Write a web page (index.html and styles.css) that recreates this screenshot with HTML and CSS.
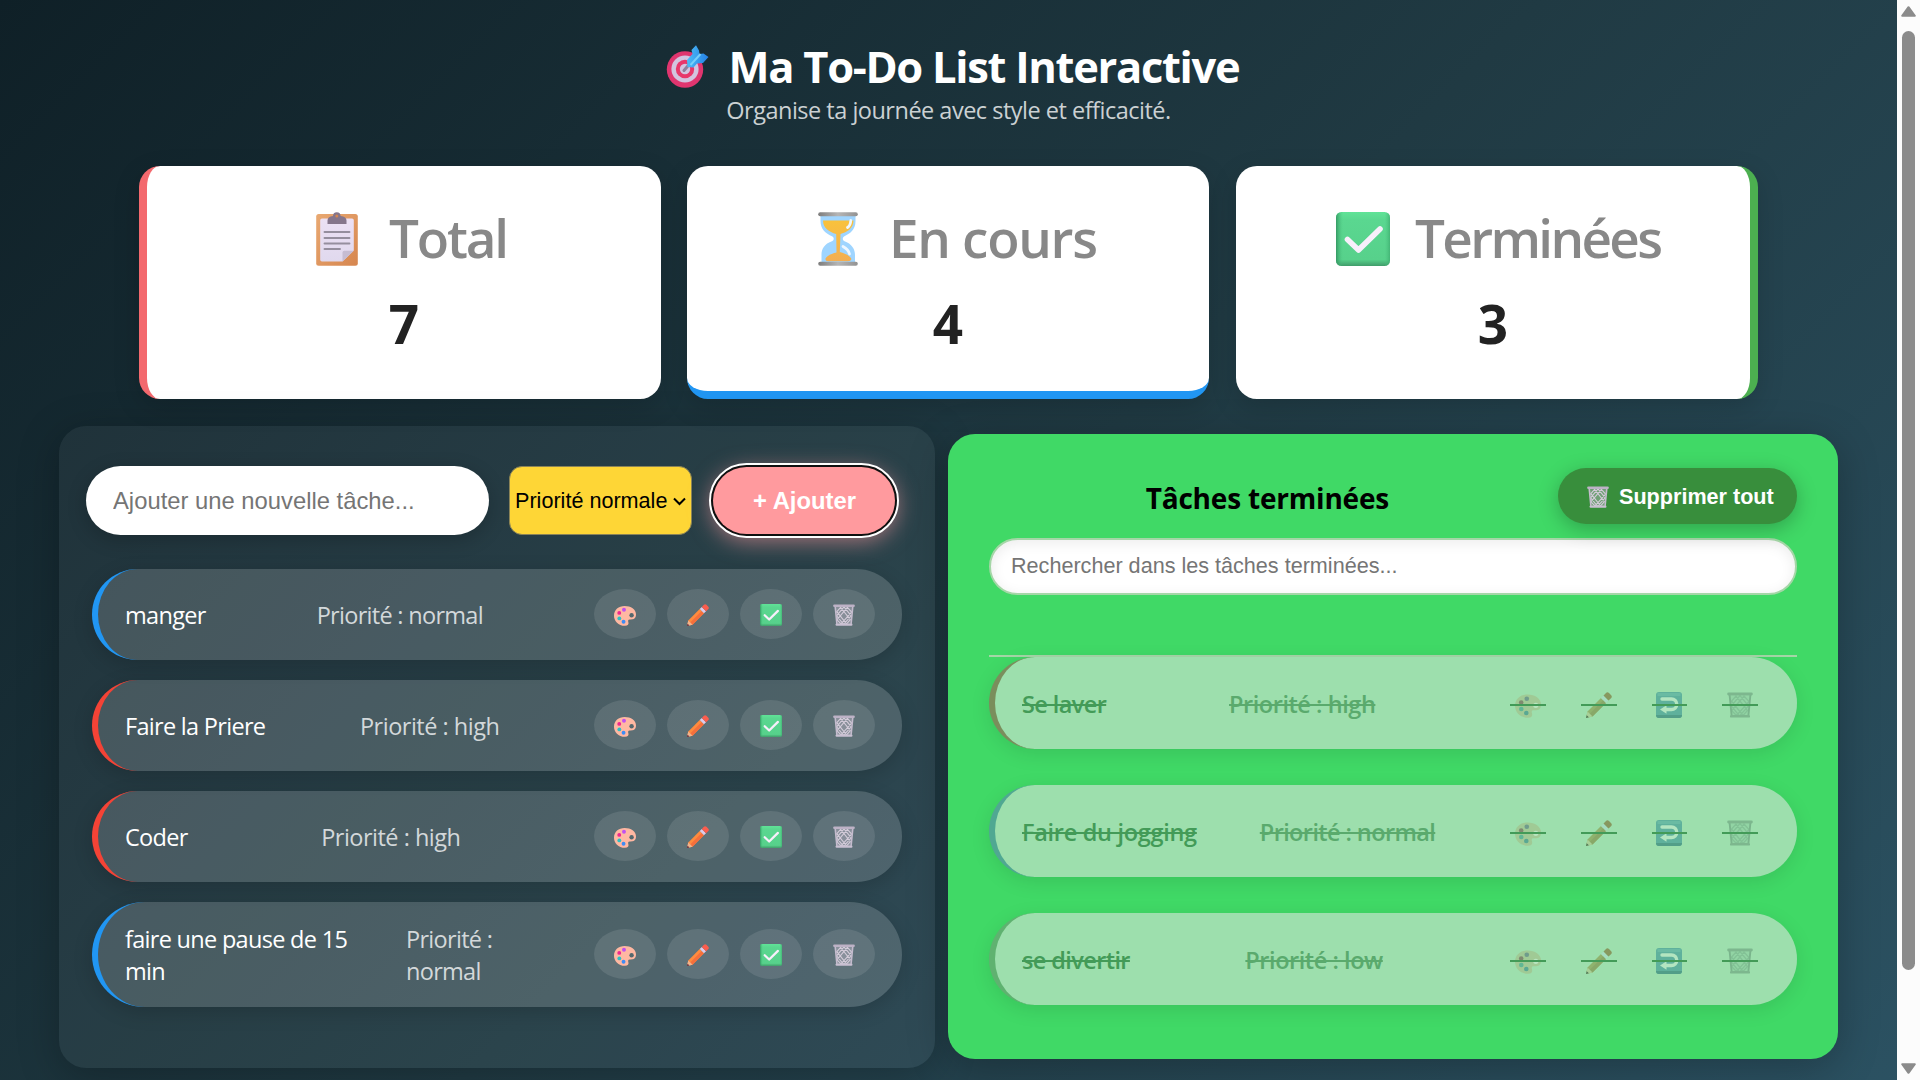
FILE: index.html
```html
<!DOCTYPE html>
<html lang="fr">
<head>
<meta charset="utf-8">
<title>Ma To-Do List Interactive</title>
<link rel="stylesheet" href="styles.css">
</head>
<body>
<svg class="sprite" aria-hidden="true">
  <defs>
    <linearGradient id="g-sand" x1="0" y1="0" x2="0" y2="1"><stop offset="0" stop-color="#f9c23c"/><stop offset="1" stop-color="#f3ae52"/></linearGradient>
    <linearGradient id="g-metal" x1="0" y1="0" x2="1" y2="0"><stop offset="0" stop-color="#7d7d7d"/><stop offset=".5" stop-color="#b5b5b5"/><stop offset="1" stop-color="#929292"/></linearGradient>
    <linearGradient id="g-board" x1="0" y1="0" x2="1" y2="1"><stop offset="0" stop-color="#e9a972"/><stop offset="1" stop-color="#d6864f"/></linearGradient>
    <linearGradient id="g-paper" x1="0" y1="0" x2="0" y2="1"><stop offset="0" stop-color="#ece0f4"/><stop offset="1" stop-color="#e0d9ee"/></linearGradient>
    <linearGradient id="g-check" x1="0" y1="0" x2="0" y2="1"><stop offset="0" stop-color="#60e397"/><stop offset=".15" stop-color="#5ad790"/><stop offset=".88" stop-color="#57d18b"/><stop offset="1" stop-color="#409c6a"/></linearGradient>
    <linearGradient id="g-side" x1="0" y1="0" x2="1" y2="0"><stop offset="0" stop-color="#2f8f5c" stop-opacity=".85"/><stop offset=".13" stop-color="#49c47f" stop-opacity="0"/><stop offset=".9" stop-color="#49c47f" stop-opacity="0"/><stop offset="1" stop-color="#3ba86c" stop-opacity=".7"/></linearGradient>
    <linearGradient id="g-dart" x1="0" y1="0" x2="1" y2="0"><stop offset="0" stop-color="#4cbcf5"/><stop offset="1" stop-color="#2480e6"/></linearGradient>
  </defs>
  <symbol id="i-target" viewBox="0 0 42 43">
    <ellipse cx="18.5" cy="24.5" rx="18.2" ry="18.3" fill="#e0356f"/>
    <circle cx="18.5" cy="24" r="13.6" fill="#d3c3df"/>
    <circle cx="18.5" cy="24" r="9.2" fill="#e8366a"/>
    <circle cx="18.5" cy="24" r="5.2" fill="#d3c3df"/>
    <path d="M17.5 25.5 23 19" stroke="#8e7f9d" stroke-width="3" stroke-linecap="round"/>
    <path d="M21 22 20.500 15 26 9 25 5 29.500 .3 32.500 5.500 33 9 37 8.500 42 12 36.500 18 30.500 18.500 27 22.500Z" fill="url(#g-dart)"/>
    <path d="M24 20 34 9" stroke="#77cffa" stroke-width="2"/>
  </symbol>
  <symbol id="i-clipboard" viewBox="0 0 42 54">
    <rect x=".2" y="2" width="41.600" height="51.800" rx="2.500" fill="url(#g-board)"/>
    <path d="M6 6.500H36a1.800 1.800 0 0 1 1.800 1.800V38.500L26.500 49.500H6a1.800 1.800 0 0 1-1.800-1.800V8.300A1.800 1.800 0 0 1 6 6.500Z" fill="url(#g-paper)"/>
    <path d="M26.500 49.500V40.500a1.800 1.800 0 0 1 1.800-1.800h9.500Z" fill="#c6bcd2"/>
    <path d="M11.500 12V8.500Q11.500 4.500 17 4a3.800 3.800 0 0 1 7.600 0Q30.500 4.500 30.500 8.500V12Z" fill="#85758b"/>
    <circle cx="20.800" cy="4" r="1.500" fill="#d6864f"/>
    <path d="M8.500 20H33.500M8.500 26H33.500M8.500 31.500H33.500M8.500 37H24" stroke="#958e9e" stroke-width="1.900" stroke-linecap="round"/>
  </symbol>
  <symbol id="i-hourglass" viewBox="0 0 40 54">
    <path d="M2.500 3H37.500V9C37.500 18 32 21.500 26 24.500Q23.500 26.500 26 29C34 32 37 37 37 43V51H3.500V43C3.500 37 6 32 14.500 29Q17 26.500 14.500 24.500C7 21 2.500 17 2.500 9Z" fill="#9fd5ff"/>
    <path d="M5 8.500H35.500C35.500 17 28 20.500 22.500 22L21.800 40C27 41.500 32 43.500 33.500 47Q33 49.300 30 49.300H10Q7 49.300 7.500 46.500C9 43.500 14 41.500 18.500 40.500L18.200 22C11 20 5 16 5 8.500Z" fill="url(#g-sand)"/>
    <path d="M32.800 8.500Q32.500 13.500 29.500 15.500M25 34.500Q30.500 37.500 31.500 42" stroke="#eef7ff" stroke-width="2.800" stroke-linecap="round" fill="none"/>
    <rect x=".2" y=".2" width="39.600" height="4" rx="2" fill="url(#g-metal)"/>
    <rect x=".2" y="49.800" width="39.600" height="4" rx="2" fill="url(#g-metal)"/>
  </symbol>
  <symbol id="i-check" viewBox="0 0 54 54">
    <rect width="54" height="54" rx="5.500" fill="url(#g-check)"/>
    <rect width="54" height="54" rx="5.500" fill="url(#g-side)"/>
    <path d="M11.500 27.500 22.500 38 44 17" fill="none" stroke="#f7effb" stroke-width="5.600" stroke-linecap="round" stroke-linejoin="round"/>
  </symbol>
  <symbol id="i-palette" viewBox="0 0 26 26">
    <path d="M12.500 2.500C20 2.500 26 6.500 26 12.500 26 18 22 18.500 19 18.200 16.500 18 16.500 19.500 17 21.500 17.600 24 16.500 25.800 13 25.800 5 25.800 0 20 0 13.800 0 7 5.500 2.500 12.500 2.500Z" fill="var(--pal, #ffb8a2)"/>
    <circle cx="20.800" cy="13.300" r="2.600" fill="var(--hole, #54686e)"/>
    <circle cx="11.800" cy="6.800" r="2.300" fill="var(--c1, #c050f0)"/>
    <circle cx="6.200" cy="10.500" r="2.300" fill="var(--c2, #f0278f)"/>
    <circle cx="6.300" cy="17" r="2.300" fill="var(--c3, #2fc0c4)"/>
    <circle cx="11.300" cy="21" r="2.300" fill="var(--c4, #3f8cf4)"/>
  </symbol>
  <symbol id="i-pencil" viewBox="0 0 26 26">
    <path d="M0 26 1.500 19.500 15 6 20 11 6.500 24.500Z" fill="var(--body, #ff8b3d)"/>
    <path d="M3.800 21.800 17.300 8.300 20 11 6.500 24.500Z" fill="var(--edge, #f56f3c)"/>
    <path d="M0 26 1.500 19.500 6.500 24.500Z" fill="var(--wood, #f0b38e)"/>
    <path d="M0 26 .700 23.200 2.800 25.300Z" fill="var(--lead, #4b1f3a)"/>
    <path d="M15 6 17.500 3.500 22.500 8.500 20 11Z" fill="var(--band, #dccbe8)"/>
    <path d="M17.500 3.500 20 1Q21.300-.5 23 1L25.200 3.200Q26.500 4.800 25 6.200L22.500 8.500Z" fill="var(--rub, #fb5d4e)"/>
  </symbol>
  <symbol id="i-trash" viewBox="0 0 26 26">
    <path d="M3 3.500 5 23.500H21L23 3.500Z" fill="var(--mesh, #c5bccd)" fill-opacity=".4"/>
    <path d="M3.800 10 9 4 20.500 18.500 16 23.500 4.500 9M4.500 18.500 9.500 23.500 22 9.500 17 4 4.800 18.500M13 3.500 4.300 14 12.500 24 21.500 14Z" fill="none" stroke="var(--mesh, #d3cbd9)" stroke-width="1.300"/>
    <path d="M2.600 3 4.600 23.500M23.400 3 21.400 23.500" stroke="var(--side, #c4bbcd)" stroke-width="1.900"/>
    <rect x=".2" y=".6" width="25.600" height="2.900" rx="1.400" fill="var(--rim, #bdb2c6)"/>
    <rect x="3" y="23" width="20" height="2.600" rx="1.200" fill="var(--rim, #c9c0d2)"/>
  </symbol>
  <symbol id="i-return" viewBox="0 0 26 26">
    <rect width="26" height="26" rx="3" fill="#5fb19c"/>
    <path d="M1.500 1H24.500V4H1.500Z" fill="#6abba3"/>
    <path d="M0 23H26Q26 26 23 26H3Q0 26 0 23Z" fill="#529e88"/>
    <path d="M6 7H15.500A5.200 5.200 0 0 1 15.500 17.500H9" fill="none" stroke="#b3e5c0" stroke-width="3.400" stroke-linecap="round"/>
    <path d="M4 17.500 10.500 13.200V21.800Z" fill="#b3e5c0"/>
  </symbol>
</svg>

<main class="page">
  <header class="hero">
    <h1 class="title"><svg class="title-icon"><use href="#i-target"/></svg><span>Ma To-Do List Interactive</span></h1>
    <p class="subtitle">Organise ta journée avec style et efficacité.</p>
  </header>

  <section class="stats">
    <article class="stat stat-total">
      <h2 class="stat-label"><svg class="ico-clip"><use href="#i-clipboard"/></svg><span>Total</span></h2>
      <p class="stat-value">7</p>
    </article>
    <article class="stat stat-progress">
      <h2 class="stat-label"><svg class="ico-hour"><use href="#i-hourglass"/></svg><span>En cours</span></h2>
      <p class="stat-value">4</p>
    </article>
    <article class="stat stat-done">
      <h2 class="stat-label"><svg class="ico-check"><use href="#i-check"/></svg><span>Terminées</span></h2>
      <p class="stat-value">3</p>
    </article>
  </section>

  <div class="columns">
    <section class="panel todo">
      <form class="add">
        <input class="add-input" type="text" placeholder="Ajouter une nouvelle tâche...">
        <div class="add-select"><span>Priorité normale</span><svg class="chevron" viewBox="0 0 13 9"><path d="M1 1.500 6.500 7 12 1.500" fill="none" stroke="#000" stroke-width="2"/></svg></div>
        <button class="add-button" type="button">+ Ajouter</button>
      </form>
      <ul class="tasks">
        <li class="task normal"><span class="name">manger</span><span class="prio">Priorité : normal</span><div class="actions"><button><svg><use href="#i-palette"/></svg></button><button><svg><use href="#i-pencil"/></svg></button><button><svg><use href="#i-check"/></svg></button><button><svg><use href="#i-trash"/></svg></button></div></li>
        <li class="task high"><span class="name">Faire la Priere</span><span class="prio">Priorité : high</span><div class="actions"><button><svg><use href="#i-palette"/></svg></button><button><svg><use href="#i-pencil"/></svg></button><button><svg><use href="#i-check"/></svg></button><button><svg><use href="#i-trash"/></svg></button></div></li>
        <li class="task high"><span class="name">Coder</span><span class="prio">Priorité : high</span><div class="actions"><button><svg><use href="#i-palette"/></svg></button><button><svg><use href="#i-pencil"/></svg></button><button><svg><use href="#i-check"/></svg></button><button><svg><use href="#i-trash"/></svg></button></div></li>
        <li class="task normal tall"><span class="name">faire une pause de 15<br>min</span><span class="prio">Priorité :<br>normal</span><div class="actions"><button><svg><use href="#i-palette"/></svg></button><button><svg><use href="#i-pencil"/></svg></button><button><svg><use href="#i-check"/></svg></button><button><svg><use href="#i-trash"/></svg></button></div></li>
      </ul>
    </section>

    <section class="panel finished">
      <div class="finished-head">
        <h2 class="finished-title">Tâches terminées</h2>
        <button class="clear"><svg class="clear-icon"><use href="#i-trash"/></svg><span>Supprimer tout</span></button>
      </div>
      <input class="search" type="text" placeholder="Rechercher dans les tâches terminées...">
      <ul class="done-list">
        <li class="done high"><span class="name">Se laver</span><span class="prio">Priorité : high</span><div class="actions"><button><svg><use href="#i-palette"/></svg></button><button><svg><use href="#i-pencil"/></svg></button><button><svg><use href="#i-return"/></svg></button><button><svg><use href="#i-trash"/></svg></button></div></li>
        <li class="done normal"><span class="name">Faire du jogging</span><span class="prio">Priorité : normal</span><div class="actions"><button><svg><use href="#i-palette"/></svg></button><button><svg><use href="#i-pencil"/></svg></button><button><svg><use href="#i-return"/></svg></button><button><svg><use href="#i-trash"/></svg></button></div></li>
        <li class="done low"><span class="name">se divertir</span><span class="prio">Priorité : low</span><div class="actions"><button><svg><use href="#i-palette"/></svg></button><button><svg><use href="#i-pencil"/></svg></button><button><svg><use href="#i-return"/></svg></button><button><svg><use href="#i-trash"/></svg></button></div></li>
      </ul>
    </section>
  </div>
</main>
<aside class="scrollbar">
  <svg class="arrow" viewBox="0 0 15 11"><path d="M7.500 1.200 13.800 9.800H1.200Z" fill="#8b8b8b" stroke="#8b8b8b" stroke-width="2" stroke-linejoin="round"/></svg>
  <div class="thumb"></div>
  <svg class="arrow" viewBox="0 0 15 11"><path d="M7.500 9.800 13.800 1.200H1.200Z" fill="#8b8b8b" stroke="#8b8b8b" stroke-width="2" stroke-linejoin="round"/></svg>
</aside>
</body>
</html>
```
FILE: styles.css
```css
* { box-sizing: border-box; }

body {
  margin: 0;
  height: 1080px;
  display: grid;
  grid-template-columns: 1fr 23px;
  overflow: hidden;
  font-family: "Open Sans", "Noto Sans", sans-serif;
}

h1, h2, p, ul { margin: 0; padding: 0; }
ul { list-style: none; }
button { border: 0; padding: 0; font: inherit; }
.sprite { position: absolute; width: 0; height: 0; }

.page {
  height: 1080px;
  padding-top: 40px;
  background: linear-gradient(135deg, #0f2027, #203a43, #2c5364) 0 0 / 100% 1190px no-repeat;
}

/* Header */
.hero { display: flex; flex-direction: column; align-items: center; height: 126px; }
.title {
  display: flex;
  align-items: center;
  gap: 20px;
  height: 54px;
  padding-left: 8px;
  font-size: 43.500px;
  line-height: 54px;
  font-weight: 700;
  letter-spacing: -1.300px;
  color: #fff;
}
.title-icon { width: 43px; height: 43px; margin-bottom: 2px; }
.title span { white-space: nowrap; }
.subtitle { height: 34px; line-height: 33px; font-size: 23.500px; font-weight: 430; letter-spacing: -.500px; color: #cbd1d3; }

/* Statistics */
.stats {
  display: grid;
  grid-template-columns: 522px 522px 523px;
  gap: 26px;
  padding-left: 139px;
  height: 233px;
}
.stat {
  display: flex;
  flex-direction: column;
  align-items: center;
  padding-top: 36px;
  background: #fff;
  border-radius: 21px;
  box-shadow: 0 8px 27px rgba(0, 0, 0, .15);
}
.stat-total { border-left: 8px solid #f3696e; }
.stat-progress { border-bottom: 8px solid #2196f3; }
.stat-done { margin-left: 1px; border-right: 8px solid #4caf50; }
.stat-label {
  display: flex;
  align-items: center;
  align-self: stretch;
  height: 74px;
  line-height: 72px;
  font-size: 53px;
  font-weight: 600;
  white-space: nowrap;
  color: #888;
}
.stat-label span { padding-bottom: 2px; }
.stat-total .stat-label { padding-left: 169px; letter-spacing: -2.200px; }
.stat-progress .stat-label { padding-left: 131px; letter-spacing: -1.300px; }
.stat-done .stat-label { padding-left: 100px; letter-spacing: -2.650px; }
.stat-value { margin-top: 12px; height: 72px; line-height: 72px; font-size: 53px; font-weight: 700; color: #222; }
.ico-clip { width: 42px; height: 54px; margin-right: 31px; }
.ico-hour { width: 40px; height: 54px; margin-right: 31px; }
.ico-check { width: 54px; height: 54px; margin-right: 25px; }

/* Columns */
.columns { display: flex; gap: 13px; align-items: flex-start; padding: 27px 59px 0; }
.panel { border-radius: 27px; box-shadow: 0 8px 40px rgba(0, 0, 0, .25); }
.todo { width: 876px; height: 642px; padding: 40px 27px; background: rgba(255, 255, 255, .05); }
.add { display: flex; margin: 0; }
.add-input {
  width: 403px;
  height: 69px;
  padding: 0 27px;
  border: 0;
  border-radius: 35px;
  background: #fff;
  font: 23.800px "Liberation Sans", Arial, sans-serif;
  box-shadow: 0 5px 20px rgba(0, 0, 0, .2);
}
.add-select {
  display: flex;
  align-items: center;
  justify-content: space-between;
  width: 183px;
  height: 69px;
  margin-left: 20px;
  padding: 1px 5px 0;
  border: 1px solid #8a8358;
  border-radius: 13px;
  background: #fed636;
  font: 21.600px "Liberation Sans", Arial, sans-serif;
  white-space: nowrap;
  color: #000;
}
.chevron { width: 13px; height: 9px; }
.add-button {
  width: 182px;
  height: 67px;
  margin: 1px 0 0 21px;
  padding-left: 1px;
  border-radius: 34px;
  background: #ff9a9e;
  outline: 2px solid #fff;
  outline-offset: 2px;
  box-shadow: 0 0 0 2.500px #101010, 0 5px 22px 2px rgba(255, 154, 158, .6);
  font: bold 23.800px "Liberation Sans", Arial, sans-serif;
  color: #fff;
}
.tasks { display: grid; gap: 20px; margin: 34px 6px 0; }
.task {
  display: flex;
  align-items: center;
  justify-content: space-between;
  width: 810px;
  height: 91px;
  padding: 0 27px;
  border-left: 6px solid #2196f3;
  border-radius: 53px;
  background: rgba(255, 255, 255, .16);
  box-shadow: 0 5px 20px rgba(0, 0, 0, .16);
  font-size: 23.500px;
  line-height: 32px;
  font-weight: 440;
  letter-spacing: -.700px;
  color: #fff;
  white-space: nowrap;
}
.task.high { border-left-color: #f44336; }
.task.tall { height: 105px; }
.task .name, .task .prio { padding-top: 1px; }
.done .name, .done .prio { padding-top: 2px; }
.tall .name { width: 281px; }
.tall .prio { margin-right: auto; }
.task .prio { color: #d3d8da; }
.task.high .prio { letter-spacing: -.500px; }
.actions { display: flex; }
.task .actions { gap: 11px; margin-top: -1px; }
.task button {
  display: grid;
  place-items: center;
  width: 62px;
  height: 50px;
  padding-top: 2px;
  border-radius: 50%;
  background: rgba(255, 255, 255, .1);
}
.task button svg { width: 22px; height: 22px; }

/* Finished tasks */
.finished { width: 890px; height: 625px; margin-top: 8px; padding: 34px 41px; background: #40d966; }
.finished-head { display: flex; align-items: center; justify-content: flex-end; height: 56px; }
.finished-title {
  margin-right: 169px;
  padding-top: 4px;
  font-size: 28px;
  font-weight: 700;
  line-height: 56px;
  letter-spacing: -.200px;
  color: #000;
  white-space: nowrap;
}
.clear {
  display: flex;
  align-items: center;
  gap: 10px;
  width: 239px;
  height: 56px;
  padding: 2px 0 0 29px;
  border-radius: 28px;
  background: #388e3c;
  box-shadow: 0 5px 20px rgba(0, 0, 0, .25);
  font: bold 21.600px "Liberation Sans", Arial, sans-serif;
  color: #fff;
  white-space: nowrap;
}
.clear-icon { width: 22px; height: 22px; }
.search {
  display: block;
  width: 808px;
  height: 57px;
  margin-top: 14px;
  padding: 0 20px 1px;
  border: 2px solid #a5d6a7;
  border-radius: 29px;
  background: #fff;
  box-shadow: inset 0 3px 14px rgba(0, 0, 0, .08);
  font: 21.600px "Liberation Sans", Arial, sans-serif;
}
.done-list {
  display: grid;
  gap: 36px;
  margin-top: 60px;
  border-top: 2px solid #a5d6a7;
}
.done {
  display: flex;
  align-items: center;
  justify-content: space-between;
  height: 92px;
  padding: 0 27px;
  border-left: 6px solid #7a8e5c;
  border-radius: 46px;
  background: #9ddfad;
  box-shadow: 0 5px 20px rgba(0, 0, 0, .1);
  font-size: 23.500px;
  line-height: 32px;
  font-weight: 600;
  letter-spacing: -.600px;
  color: #439b58;
  white-space: nowrap;
  --pal: #a0ca95; --hole: #b8e6c0; --c1: #6f9c8c; --c2: #7f8a70; --c3: #60b795; --c4: #59a893;
  --body: #8fb36e; --edge: #88a868; --wood: #a8cf97; --lead: #4c7655; --band: #a5dcc0; --rub: #87985f;
  --mesh: #83c296; --side: #7ab58c; --rim: #7db78e;
}
.done.normal { border-left-color: #50a892; }
.done.low { border-left-color: #5fb270; }
.done .name, .done .prio { text-decoration: line-through 2px; }
.done .prio { color: #5aaa6d; }
.done.normal .name { letter-spacing: -.300px; }
.done.high .prio, .done.low .prio { letter-spacing: -.450px; }
.done .actions { gap: 11px; }
.done button { position: relative; display: grid; place-items: center; width: 59.700px; height: 52px; background: none; }
.done button::after {
  content: "";
  position: absolute;
  left: 12px;
  right: 12px;
  top: 27px;
  height: 2px;
  background: #439b58;
}
.done button svg { width: 26px; height: 26px; margin-top: 4px; }

/* Scrollbar */
.scrollbar {
  display: flex;
  flex-direction: column;
  align-items: center;
  justify-content: space-between;
  height: 1080px;
  padding: 6px 0;
  background: #fcfcfc;
}
.thumb { width: 13px; height: 939px; margin-bottom: 79px; border-radius: 7px; background: #8b8b8b; }
.arrow { width: 15px; height: 11px; }
```
